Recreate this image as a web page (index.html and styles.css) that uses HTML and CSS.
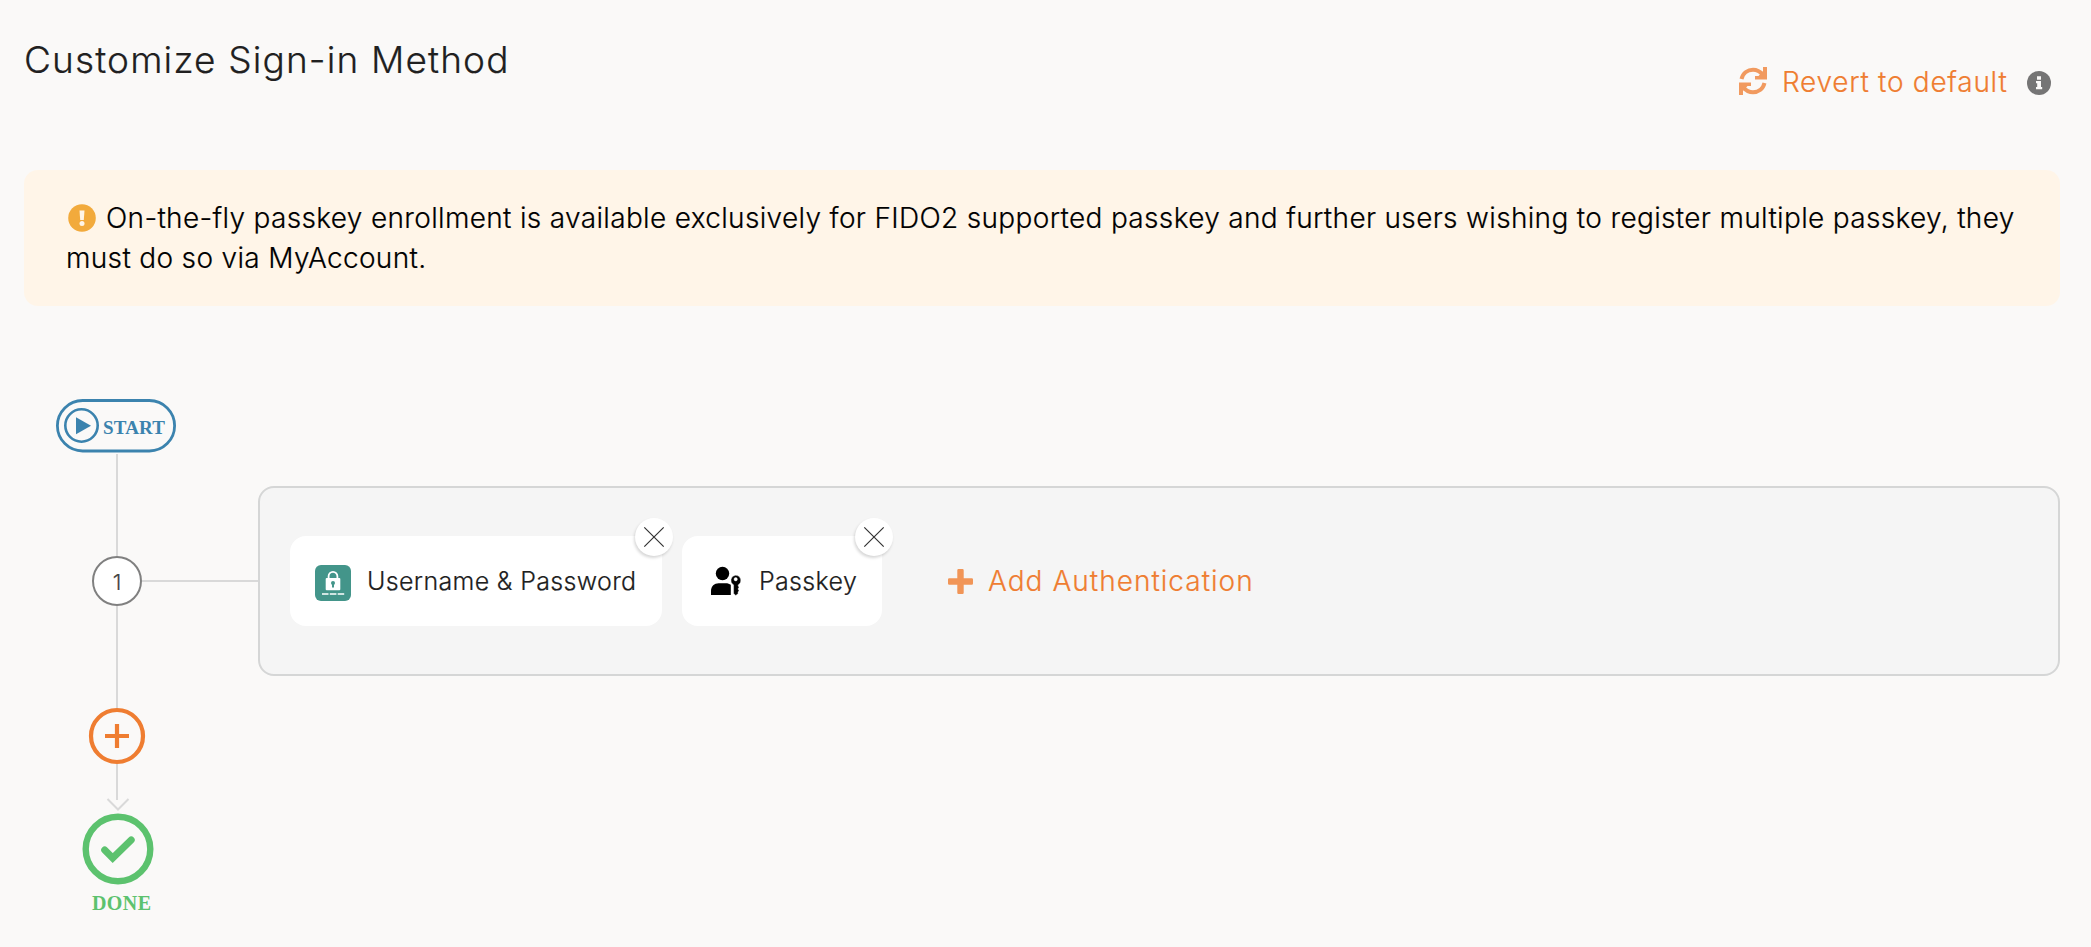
FILE: index.html
```html
<!DOCTYPE html>
<html lang="en">
<head>
<meta charset="utf-8">
<title>Customize Sign-in Method</title>
<link rel="stylesheet" href="styles.css">
</head>
<body>
<main class="page">
  <header class="header">
    <h1 class="title">Customize Sign-in Method</h1>
    <div class="actions">
      <svg class="revert-icon" viewBox="0 0 28 28" fill="none" stroke="#f19a5f" stroke-width="4">
        <path d="M2.500 12C4 5.800 8.800 2.800 14 2.800c4 0 7 1.700 9.500 4.800"/>
        <path d="M25.500 16c-1.500 6.200-6.300 9.200-11.500 9.200-4 0-7-1.700-9.500-4.800"/>
        <path d="M28 0v12.500H16V9h3.500l4.500-5V0zM0 28V15.500h12V19H8.500L4 24v4z" fill="#f19a5f" stroke="none"/>
      </svg>
      <a class="link revert">Revert to default</a>
      <svg class="info-icon" viewBox="0 0 24 24">
        <circle cx="12" cy="12" r="12" fill="#757575"/>
        <path d="M10 5.200h4v3.500h-4zM9 10h5v6h1.200v2.200H9V16h1.200v-3.800H9z" fill="#faf9f8"/>
      </svg>
    </div>
  </header>

  <section class="notice">
    <svg class="notice-icon" viewBox="0 0 28 28">
      <circle cx="14" cy="14" r="13.800" fill="#f2aa3c"/>
      <path d="M11.500 6.500h5l-.7 9.500h-3.600z" fill="#fff5e8"/>
      <circle cx="14" cy="19.500" r="2.500" fill="#fff5e8"/>
    </svg><span class="notice-first">On-the-fly passkey enrollment is available exclusively for FIDO2 supported passkey and further users wishing to register multiple passkey, they</span> <span class="notice-rest">must do so via MyAccount.</span>
  </section>

  <section class="flow">
    <div class="rail">
      <svg class="start" viewBox="0 0 120 54">
        <rect x="1.400" y="1.500" width="117.200" height="50.500" rx="25.250" fill="none" stroke="#3b83ae" stroke-width="2.800"/>
        <circle cx="25.500" cy="26.500" r="16.200" fill="none" stroke="#3b83ae" stroke-width="2.600"/>
        <path d="M20 18.300v17l15-8.500z" fill="#3b83ae"/>
        <text class="mark-text start-text" x="47" y="35" textLength="62" fill="#3b83ae">START</text>
      </svg>
      <div class="line line-top"></div>
    </div>
    <div class="step">
      <div class="rail step-rail">
        <div class="line grow"></div>
        <div class="step-number">1</div>
        <div class="line grow"></div>
      </div>
      <div class="connector"></div>
      <div class="panel">
        <div class="card card-password">
          <svg class="lock-icon" viewBox="0 0 36 36">
            <rect width="36" height="36" rx="6" fill="#43958a"/>
            <path d="M13.600 14v-2.800a4.400 4.400 0 0 1 8.800 0V14" fill="none" stroke="#fff" stroke-width="1.800"/>
            <rect x="10.700" y="13" width="14.600" height="12.300" rx="1" fill="#fff"/>
            <circle cx="18" cy="18" r="2" fill="#43958a"/>
            <path d="M17 18h2v4.500h-2z" fill="#43958a"/>
            <path d="M7 29h6.500M14.800 29h6.600M22.700 29h6.500" stroke="#fff" stroke-width="1.700"/>
          </svg>
          <span class="card-label">Username &amp; Password</span>
          <button class="remove" aria-label="Remove"><svg viewBox="0 0 20 20"><path d="M.3.3l19.400 19.400M19.700.3L.3 19.700" stroke="#333" stroke-width="1.200"/></svg></button>
        </div>
        <div class="card card-passkey">
          <svg class="passkey-icon" viewBox="0 0 30 28">
            <circle cx="11.500" cy="6.500" r="6.700"/>
            <path d="M0 28v-4c0-5 3.300-7.800 7.700-7.800h7.100c2 0 3.700.6 5 1.600V28z"/>
            <path fill-rule="evenodd" d="M24.700 8.200a5.200 5.200 0 0 1 2.500 9.700v.9l.8 1.500-1 1.700 1 1.500-1 1.700.2 1.400-2.400 1.800-2.200-2v-8.500a5.200 5.200 0 0 1 2.100-9.700zM24.700 10.500a1.700 1.700 0 1 0 0 3.400 1.700 1.700 0 0 0 0-3.400z" stroke="#fff" stroke-width=".4"/>
          </svg>
          <span class="card-label passkey-label">Passkey</span>
          <button class="remove" aria-label="Remove"><svg viewBox="0 0 20 20"><path d="M.3.3l19.400 19.400M19.700.3L.3 19.700" stroke="#333" stroke-width="1.200"/></svg></button>
        </div>
        <div class="add">
          <svg class="add-icon" viewBox="0 0 25 25"><path d="M10.500 0h4q1.200 0 1.200 1.200v8.100h8.100Q25 9.300 25 10.500v4q0 1.200-1.200 1.200h-8.100v8.100Q15.700 25 14.500 25h-4q-1.200 0-1.200-1.200v-8.100H1.200Q0 15.700 0 14.500v-4Q0 9.300 1.200 9.300h8.100V1.200Q9.300 0 10.500 0z" fill="#f19557"/></svg>
          <a class="link add-label">Add Authentication</a>
        </div>
      </div>
    </div>
    <div class="rail">
      <div class="line line-after"></div>
      <svg class="plus" viewBox="0 0 56 56"><circle cx="28" cy="28" r="26" fill="none" stroke="#ef7d31" stroke-width="4.200"/><path d="M16 28h24M28 16v24" stroke="#ef7d31" stroke-width="4.200"/></svg>
      <div class="line line-end"></div>
      <svg class="done" viewBox="0 0 72 116">
        <path d="M26.500 1l10.500 10.500L47.500 1" fill="none" stroke="#d9d9d9" stroke-width="2"/>
        <circle cx="37" cy="51" r="32.300" fill="none" stroke="#5cc26e" stroke-width="6.400"/>
        <path d="M23.700 52l8 8 18.500-18" fill="none" stroke="#5cc26e" stroke-width="7" stroke-linecap="round"/>
        <text class="mark-text" x="11" y="111.500" textLength="59" fill="#5cc26e">DONE</text>
      </svg>
    </div>
  </section>
</main>
</body>
</html>
```
FILE: styles.css
```css
* { box-sizing: border-box; }
body {
  margin: 0;
  background: #faf9f8;
  color: #202020;
  font-family: Inter, "Liberation Sans", sans-serif;
  font-weight: 300;
  -webkit-text-stroke-width: .2px;
}
svg { display: block; flex: none; overflow: visible; }
.page { padding: 0 31px 0 24px; }
.header { display: flex; justify-content: space-between; height: 170px; }
.title { margin: 36px 0 0; font-size: 37px; line-height: 48px; font-weight: 300; letter-spacing: 1.14px; white-space: nowrap; }
.actions { display: flex; align-items: center; height: 32px; margin: 66px 9px 0 0; }
.revert-icon { width: 28px; height: 28px; margin-top: -2px; }
.link { color: #ef7d31; font-size: 28px; line-height: 32px; white-space: nowrap; }
.revert { width: 225px; margin-left: 15px; letter-spacing: .72px; }
.info-icon { width: 24px; height: 24px; margin-left: 20px; margin-top: 2px; }
.notice {
  height: 136px;
  padding: 28px 40px 28px 42px;
  border-radius: 14px;
  background: #fff5e8;
  color: #000;
  font-size: 28px;
  line-height: 40px;
  letter-spacing: .335px;
}
.notice-icon { display: inline-block; width: 28px; height: 28px; margin: 0 10px 0 2px; vertical-align: -4px; }
.notice-first { white-space: nowrap; }
.flow { padding-top: 93px; }
.rail { display: flex; flex-direction: column; align-items: center; width: 186px; }
.line { width: 2px; background: #d9d9d9; }
.grow { flex: 1; }
.start { width: 120px; height: 54px; margin-right: 2px; }
.line-top { height: 32px; margin-top: 1px; }
.step { display: flex; align-items: center; height: 190px; }
.step-rail { height: 190px; }
.step-number {
  width: 50px; height: 50px;
  border: 2px solid #808080; border-radius: 50%;
  background: #fff; color: #444;
  font-size: 22px; line-height: 48px; text-align: center;
}
.connector { width: 116px; height: 2px; margin-left: -68px; background: #d9d9d9; }
.panel {
  display: flex; align-items: center; flex: 1; height: 190px;
  padding-left: 30px;
  border: 2px solid #d5d6d6; border-radius: 16px;
  background: #f5f5f5;
}
.card { position: relative; display: flex; align-items: center; height: 90px; border-radius: 16px; background: #fff; }
.card-password { width: 372px; padding-left: 25px; }
.card-passkey { width: 200px; margin-left: 20px; padding-left: 29px; }
.card-label { margin-left: 16px; font-size: 25px; line-height: 32px; letter-spacing: .34px; white-space: nowrap; }
.passkey-label { margin-left: 18px; }
.lock-icon { width: 36px; height: 36px; margin-top: 4px; }
.passkey-icon { width: 30px; height: 28px; }
.remove {
  position: absolute; top: -18px; right: -11px;
  display: flex; align-items: center; justify-content: center;
  width: 38px; height: 38px; padding: 0; border: 0; border-radius: 50%;
  background: #fff; box-shadow: -1px 2px 3px rgba(0, 0, 0, .16);
}
.remove svg { width: 20px; height: 20px; }
.add { display: flex; align-items: center; margin-left: 66px; }
.add-icon { width: 25px; height: 25px; }
.add-label { margin-left: 15px; letter-spacing: 1.02px; }
.line-after { height: 32px; }
.plus { width: 56px; height: 56px; }
.line-end { height: 36px; }
.done { width: 72px; height: 116px; margin-top: -2px; }
.mark-text { font-family: "Liberation Serif", serif; font-weight: 700; font-size: 20px; }
.start-text { font-size: 19px; }
```
